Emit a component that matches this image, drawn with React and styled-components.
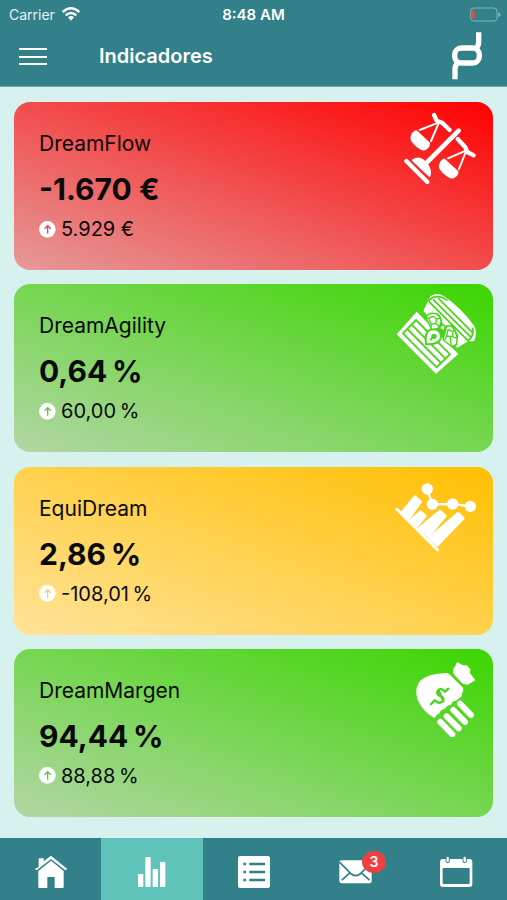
import React from "react";
import styled, { createGlobalStyle } from "styled-components";

//Styles
const GlobalStyle = createGlobalStyle`
  *, *::before, *::after {
    box-sizing: border-box;
  }
  body {
    margin: 0;
    background: #d7f1ee;
    font-family: Inter, "Liberation Sans", sans-serif;
  }
  button {
    border: 0;
    padding: 0;
    background: none;
    color: inherit;
    font: inherit;
    cursor: pointer;
  }
  svg {
    display: block;
  }
`;

const Screen = styled.div`
  display: flex;
  flex-direction: column;
  min-height: 100vh;
`;

const Top = styled.header`
  background: #32808a;
  color: #fff;
  border-bottom: 1px solid #73a9b0;
`;

const StatusBar = styled.div`
  display: grid;
  grid-template-columns: 1fr auto 1fr;
  align-items: center;
  height: 28px;
  padding: 0 6px;
`;

const Carrier = styled.span`
  display: flex;
  align-items: center;
  gap: 7px;
  padding-left: 3px;
  font-size: 14px;
  color: #e6f1f2;
`;

const Clock = styled.time`
  font-size: 15px;
  font-weight: 600;
`;

const BatterySlot = styled.span`
  justify-self: end;
`;

const TitleBar = styled.div`
  display: flex;
  align-items: center;
  height: 58px;
  padding: 0 24px 2px 19px;
`;

const MenuButton = styled.button`
  width: 28px;
  height: 28px;
`;

const Title = styled.h1`
  flex: 1;
  margin: 0 0 0 52px;
  font-size: 20px;
  line-height: 28px;
  font-weight: 600;
`;

const Cards = styled.main`
  flex: 1;
  display: flex;
  flex-direction: column;
  justify-content: space-between;
  gap: 14px;
  padding: 15px 14px 21px;
`;

const CardWrapper = styled.article`
  display: flex;
  justify-content: space-between;
  align-items: flex-start;
  height: 168px;
  padding: 8px 14px 0 25px;
  border-radius: 16px;
  color: #0a0a0a;
  background: linear-gradient(
    to bottom left,
    ${props => props.$from},
    ${props => props.$to}
  );
`;

const CardText = styled.div`
  padding-top: 20px;
`;

const Name = styled.h2`
  margin: 0;
  font-size: 21px;
  line-height: 28px;
  font-weight: 400;
`;

const Value = styled.p`
  margin: 12px 0 7px;
  font-size: 30px;
  line-height: 38px;
  font-weight: 700;
`;

const Change = styled.p`
  display: flex;
  align-items: center;
  gap: 5px;
  margin: 0;
  font-size: 20px;
  line-height: 28px;
`;

const Tabs = styled.nav`
  display: flex;
  height: 62px;
  background: #32808a;
`;

const Tab = styled.button`
  flex: 1;
  display: flex;
  justify-content: center;
  padding-top: 16px;
  background: ${props => (props.$active ? "#60c3ba" : "transparent")};
`;

const TabIcon = styled.span`
  position: relative;
  width: 36px;
  height: 36px;
`;

const Badge = styled.span`
  position: absolute;
  top: -3px;
  right: -13px;
  width: 24px;
  height: 22px;
  border-radius: 50%;
  background: #ef4040;
  color: #fff;
  font-size: 14px;
  line-height: 22px;
  font-weight: 600;
  text-align: center;
`;

//Icons
const Wifi = () => (
  <svg width="18" height="14" viewBox="0 0 54 42" aria-hidden="true">
    <g fill="none" stroke="#fff" strokeWidth="7">
      <path d="M2 15Q27-7 52 15" />
      <path d="M11 25Q27 11 43 25" />
    </g>
    <path d="M18 31Q27 23 36 31L27 41Z" fill="#fff" />
  </svg>
);

const Battery = () => (
  <svg width="31" height="15" viewBox="0 0 93 45" aria-hidden="true">
    <rect x="2" y="3" width="79" height="39" rx="9" fill="none" stroke="#84b3b9" strokeWidth="3" />
    <rect x="6" y="9" width="9" height="26" rx="3" fill="#c4564f" />
    <path d="M85 16Q92 18 92 23T85 30Z" fill="#84b3b9" />
  </svg>
);

const Menu = () => (
  <svg width="28" height="28" viewBox="0 0 28 28" stroke="#fff" strokeWidth="2" aria-hidden="true">
    <path d="M0 7H28M0 15H28M0 22H28" />
  </svg>
);

const Logo = () => (
  <svg width="32" height="48" viewBox="591 96 96 144" role="img" aria-label="Logo">
    <g fill="none" stroke="#fff" strokeWidth="16">
      <path d="M674 97V127Q674 139 663 149" />
      <path d="M603 238V207Q603 195 614 185" />
      <rect x="602" y="144" width="74" height="45" rx="20" />
    </g>
  </svg>
);

const Arrow = ({ color }) => (
  <svg width="17" height="17" viewBox="0 0 51 51" aria-hidden="true">
    <circle cx="25" cy="25" r="25" fill="#fff" />
    <path d="M26 38V15M17 23L26 14L35 23" fill="none" stroke={color} strokeWidth="4" />
  </svg>
);

const Scales = () => (
  <g fill="#fff" stroke="#fff" strokeLinecap="round" strokeLinejoin="round">
    <path d="M49 198L112 261" strokeWidth="13" />
    <path d="M70 196Q87 185 105 203T118 241Z" strokeWidth="8" />
    <path d="M111 202L206 107" strokeWidth="14" />
    <g fill="none" strokeWidth="13">
      <path d="M132 60L140 77L156 83L179 105" />
      <path d="M203 132L226 157L232 171L251 181" />
    </g>
    <path d="M89 105L147 82L123 138M174 190L229 166L207 222" fill="none" strokeWidth="6" />
    <path d="M78 110L116 146Q115 156 103 162Q93 163 75 145Q62 132 67 123Q69 115 78 110Z" strokeWidth="9" />
    <path d="M162 195L201 231Q200 241 188 246Q178 247 160 229Q147 216 152 208Q154 200 162 195Z" strokeWidth="9" />
  </g>
);

const Chest = () => (
  <g>
    <path d="M88 65L109 22Q130 8 150 22Q200 55 240 110Q252 130 240 156L217 160L190 176L150 140Z" fill="#fff" />
    <g fill="none" stroke="#45d414" strokeWidth="5">
      <path d="M104 37L221 154L228 160" />
      <path d="M117 31L232 146" />
      <path d="M132 27L238 133" />
      <path d="M104 37Q112 22 135 23Q148 24 160 34" />
      <path d="M222 154Q240 145 236 116" />
    </g>
    <path d="M105 80Q130 62 142 86L150 108L176 104L193 140L187 172L150 160Z" fill="#45d414" />
    <path d="M139 77L188 125L170 107L148 110Z" fill="#fff" />
    <path d="M8 136L68 68L193 195L126 254Z" fill="#fff" />
    <g fill="none" stroke="#54d429" strokeWidth="6">
      <path d="M27 133L66 93L168 196L128 235Z" strokeLinejoin="round" />
      <path d="M40 120L141 222M53 107L154 209" />
    </g>
    <g fill="#fff" stroke="#45d414" strokeWidth="4" strokeLinejoin="round">
      <path d="M95 84Q108 68 127 75Q142 84 141 101L134 117L114 124Z" />
      <path d="M158 112Q172 106 182 124Q193 145 187 167L172 172L147 152Z" />
      <path d="M104 88L117 82L128 90L125 103L112 106ZM128 90L139 88M125 103L136 113M112 106L110 118M104 88L95 84M162 122L177 128L175 143L158 141ZM175 143L188 148M158 141L152 154M177 128L182 122M168 143L172 170" fill="none" />
      <path d="M136 118L145 106L154 112L151 126Z" />
    </g>
    <path d="M101 127Q120 114 137 129Q146 146 134 158Q121 168 96 165Q92 143 101 127Z" fill="#fff" stroke="#4bd41c" strokeWidth="6" />
    <circle cx="120" cy="142" r="8" fill="#4bd41c" />
    <path d="M120 142L109 153" stroke="#4bd41c" strokeWidth="6" />
  </g>
);

const Growth = () => (
  <g fill="#fff" stroke="#fff" strokeLinejoin="round">
    <path d="M20 117L143 240" strokeWidth="9" strokeLinecap="round" />
    <g strokeWidth="8">
      <path d="M37 126L75 80L92 95L58 144Z" />
      <path d="M63 150L92 125L106 138L82 167Z" />
      <path d="M88 174L150 123L166 138L115 199Z" />
      <path d="M118 204L204 130L220 145L142 225Z" />
    </g>
    <path d="M112 57L127 103L188 102L241 109" fill="none" strokeWidth="7" />
    <g stroke="none">
      <circle cx="112" cy="57" r="17" />
      <circle cx="127" cy="103" r="17" />
      <circle cx="188" cy="102" r="17" />
      <circle cx="241" cy="109" r="17" />
    </g>
  </g>
);

const MoneyBag = () => (
  <g>
    <path d="M164 73Q172 70 180 77L219 116Q222 122 217 132L215 142L198 155Q187 155 183 167Q170 168 165 179Q151 181 148 193Q139 197 134 207Q100 190 83 153Q71 117 92 94Q115 74 164 73Z" fill="#fff" />
    <path d="M202 39L218 49L230 49L241 61L240 73L256 94L233 107L218 104L191 76L189 63Z" fill="#fff" />
    <path d="M151 219L187 256M170 202L206 238M190 183L225 219M210 164L243 198" stroke="#fff" strokeWidth="18" strokeLinecap="round" />
    <path d="M165 128Q153 115 144 124Q138 134 148 140Q164 144 159 155Q150 168 134 154M175 119L165 128M134 154L123 166M146 124L160 157" fill="none" stroke="#48d418" strokeWidth="7" strokeLinecap="round" />
  </g>
);

const tabs = [
  {
    label: "Inicio",
    box: "99 72 108 108",
    icon: (
      <g>
        <path d="M116 111V85H131V94L153 77L202 117L196 121L153 87L110 121L105 116Z" fill="#fff" />
        <path d="M115 123L153 92L191 123V171Q191 174 188 174H164V141H142V174H118Q115 174 115 171Z" fill="#fff" />
      </g>
    )
  },
  {
    label: "Indicadores",
    box: "404 72 108 108",
    active: true,
    icon: (
      <g fill="#fff">
        <rect x="416" y="132" width="16" height="39" rx="2" />
        <rect x="438" y="81" width="16" height="90" rx="2" />
        <rect x="460" y="117" width="16" height="54" rx="2" />
        <rect x="482" y="96" width="16" height="75" rx="2" />
      </g>
    )
  },
  {
    label: "Listado",
    box: "708 72 108 108",
    icon: (
      <g>
        <rect x="714" y="78" width="96" height="96" rx="6" fill="#fff" />
        <path d="M730 102H738M748 102H795M730 126H738M748 126H795M730 150H738M748 150H795" stroke="#32808a" strokeWidth="7" />
      </g>
    )
  },
  {
    label: "Mensajes",
    box: "249 72 108 108",
    badge: 3,
    icon: (
      <g>
        <rect x="256" y="91" width="97" height="69" rx="7" fill="#fff" />
        <path d="M258 98L292 132Q305 142 318 132L352 98M286 130L265 149M324 130L345 149" fill="none" stroke="#32808a" strokeWidth="5" strokeLinecap="round" />
      </g>
    )
  },
  {
    label: "Calendario",
    box: "554 72 108 108",
    icon: (
      <g>
        <rect x="560" y="87" width="97" height="84" rx="9" fill="#fff" />
        <rect x="568" y="114" width="81" height="48" rx="3" fill="#32808a" />
        <path d="M583 84V93M634 84V93" stroke="#32808a" strokeWidth="13" strokeLinecap="round" />
        <path d="M583 84V93M634 84V93" stroke="#fff" strokeWidth="7" strokeLinecap="round" />
      </g>
    )
  }
];

// percentages take a thin space before the sign
const indicators = [
  {
    name: "DreamFlow",
    value: "-1.670 €",
    change: "5.929 €",
    from: "#ff0000",
    to: "#e59a9a",
    arrow: "#e8455a",
    box: "15 45 252 240",
    icon: <Scales />
  },
  {
    name: "DreamAgility",
    value: "0,64\u2009%",
    change: "60,00\u2009%",
    from: "#3bd600",
    to: "#b3d6a5",
    arrow: "#55cc33",
    box: "3 9 252 252",
    icon: <Chest />
  },
  {
    name: "EquiDream",
    value: "2,86\u2009%",
    change: "-108,01\u2009%",
    from: "#ffbf00",
    to: "#ffe39a",
    arrow: "#f5cf62",
    box: "15 15 252 240",
    icon: <Growth />
  },
  {
    name: "DreamMargen",
    value: "94,44\u2009%",
    change: "88,88\u2009%",
    from: "#3bd600",
    to: "#b3d6a5",
    arrow: "#55cc33",
    box: "15 24 252 240",
    icon: <MoneyBag />
  }
];

//Render
const Card = ({ name, value, change, from, to, arrow, box, icon }) => (
  <CardWrapper $from={from} $to={to}>
    <CardText>
      <Name>{name}</Name>
      <Value>{value}</Value>
      <Change>
        <Arrow color={arrow} />
        {change}
      </Change>
    </CardText>
    <svg width="84" height={Number(box.split(" ")[3]) / 3} viewBox={box} aria-hidden="true">
      {icon}
    </svg>
  </CardWrapper>
);

const App = () => (
  <Screen>
    <GlobalStyle />
    <Top>
      <StatusBar>
        <Carrier>
          Carrier
          <Wifi />
        </Carrier>
        <Clock>8:48 AM</Clock>
        <BatterySlot>
          <Battery />
        </BatterySlot>
      </StatusBar>
      <TitleBar>
        <MenuButton aria-label="Menú">
          <Menu />
        </MenuButton>
        <Title>Indicadores</Title>
        <Logo />
      </TitleBar>
    </Top>
    <Cards>
      {indicators.map(item => (
        <Card key={item.name} {...item} />
      ))}
    </Cards>
    <Tabs>
      {tabs.map(tab => (
        <Tab key={tab.label} $active={tab.active} aria-label={tab.label}>
          <TabIcon>
            <svg width="36" height="36" viewBox={tab.box} aria-hidden="true">
              {tab.icon}
            </svg>
            {tab.badge && <Badge>{tab.badge}</Badge>}
          </TabIcon>
        </Tab>
      ))}
    </Tabs>
  </Screen>
);

export default App;
